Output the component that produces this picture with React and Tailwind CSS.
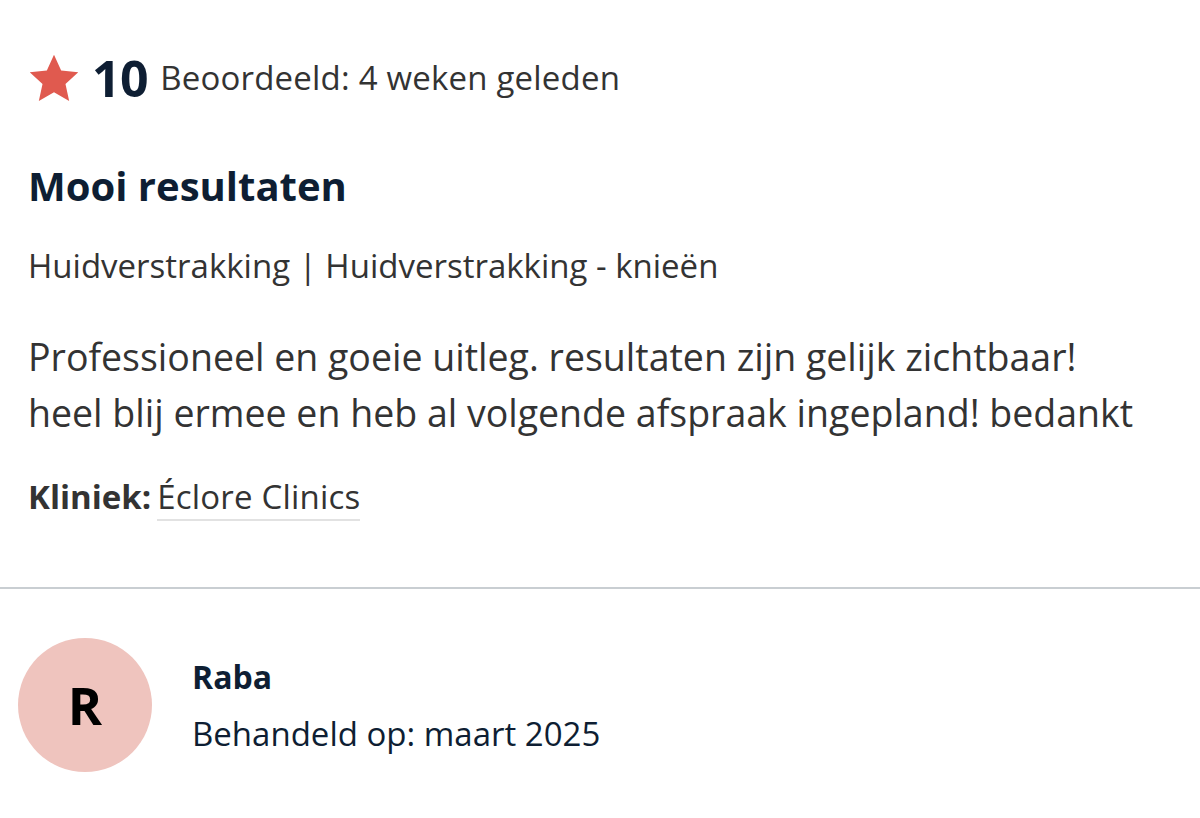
import React from "react";

export default function App() {
  return (
    <div className="w-[1200px] h-[818px] bg-white overflow-hidden" style={{ fontFamily: '"Open Sans", "Noto Sans", sans-serif' }}>
      <div className="px-[28px] pt-[50px]">
        <div className="flex items-center h-[56px]">
          <svg width="52" height="50" viewBox="0 0 24 23" className="shrink-0">
            <path d="M12 0.8l3.3 7.2 7.9 0.9-5.9 5.4 1.7 7.8L12 18.1l-7 4 1.7-7.8L0.8 8.9l7.9-0.9z" fill="#e05a4f" />
          </svg>
          <span className="ml-[12px] text-[50px] leading-[56px] font-bold text-[#0e1e33] tracking-[-0.5px]">10</span>
          <span className="ml-[12px] text-[33px] leading-[56px] text-[#333333] tracking-[0.2px]">Beoordeeld: 4 weken geleden</span>
        </div>
        <h1 className="mt-[55px] text-[40px] leading-[50px] font-bold text-[#0e1e33]">Mooi resultaten</h1>
        <p className="mt-[33px] text-[33px] leading-[44px] text-[#333333]">Huidverstrakking | Huidverstrakking - knieën</p>
        <p className="mt-[41px] text-[37.5px] leading-[56px] text-[#333333]">
          Professioneel en goeie uitleg. resultaten zijn gelijk zichtbaar!<br />heel blij ermee en heb al volgende afspraak ingepland! bedankt
        </p>
        <div className="mt-[34px] flex items-baseline text-[33px] text-[#333333]">
          <span className="font-bold leading-[44px]">Kliniek:</span>
          <span className="ml-[6px] border-b-2 border-[#e2e2e2] leading-[44px] tracking-[0.2px]">Éclore Clinics</span>
        </div>
      </div>
      <div className="mt-[66px] h-[2px] bg-[#c9ced2]" />
      <div className="flex items-center pl-[18px] pt-[49px]">
        <div className="w-[134px] h-[134px] rounded-full bg-[#efc4be] flex items-center justify-center text-[52px] font-bold text-black">R</div>
        <div className="ml-[40px] text-[#0e1e33]">
          <div className="text-[32px] font-bold leading-[44px]">Raba</div>
          <div className="mt-[13px] text-[33px] leading-[44px]">Behandeld op: maart 2025</div>
        </div>
      </div>
    </div>
  );
}
